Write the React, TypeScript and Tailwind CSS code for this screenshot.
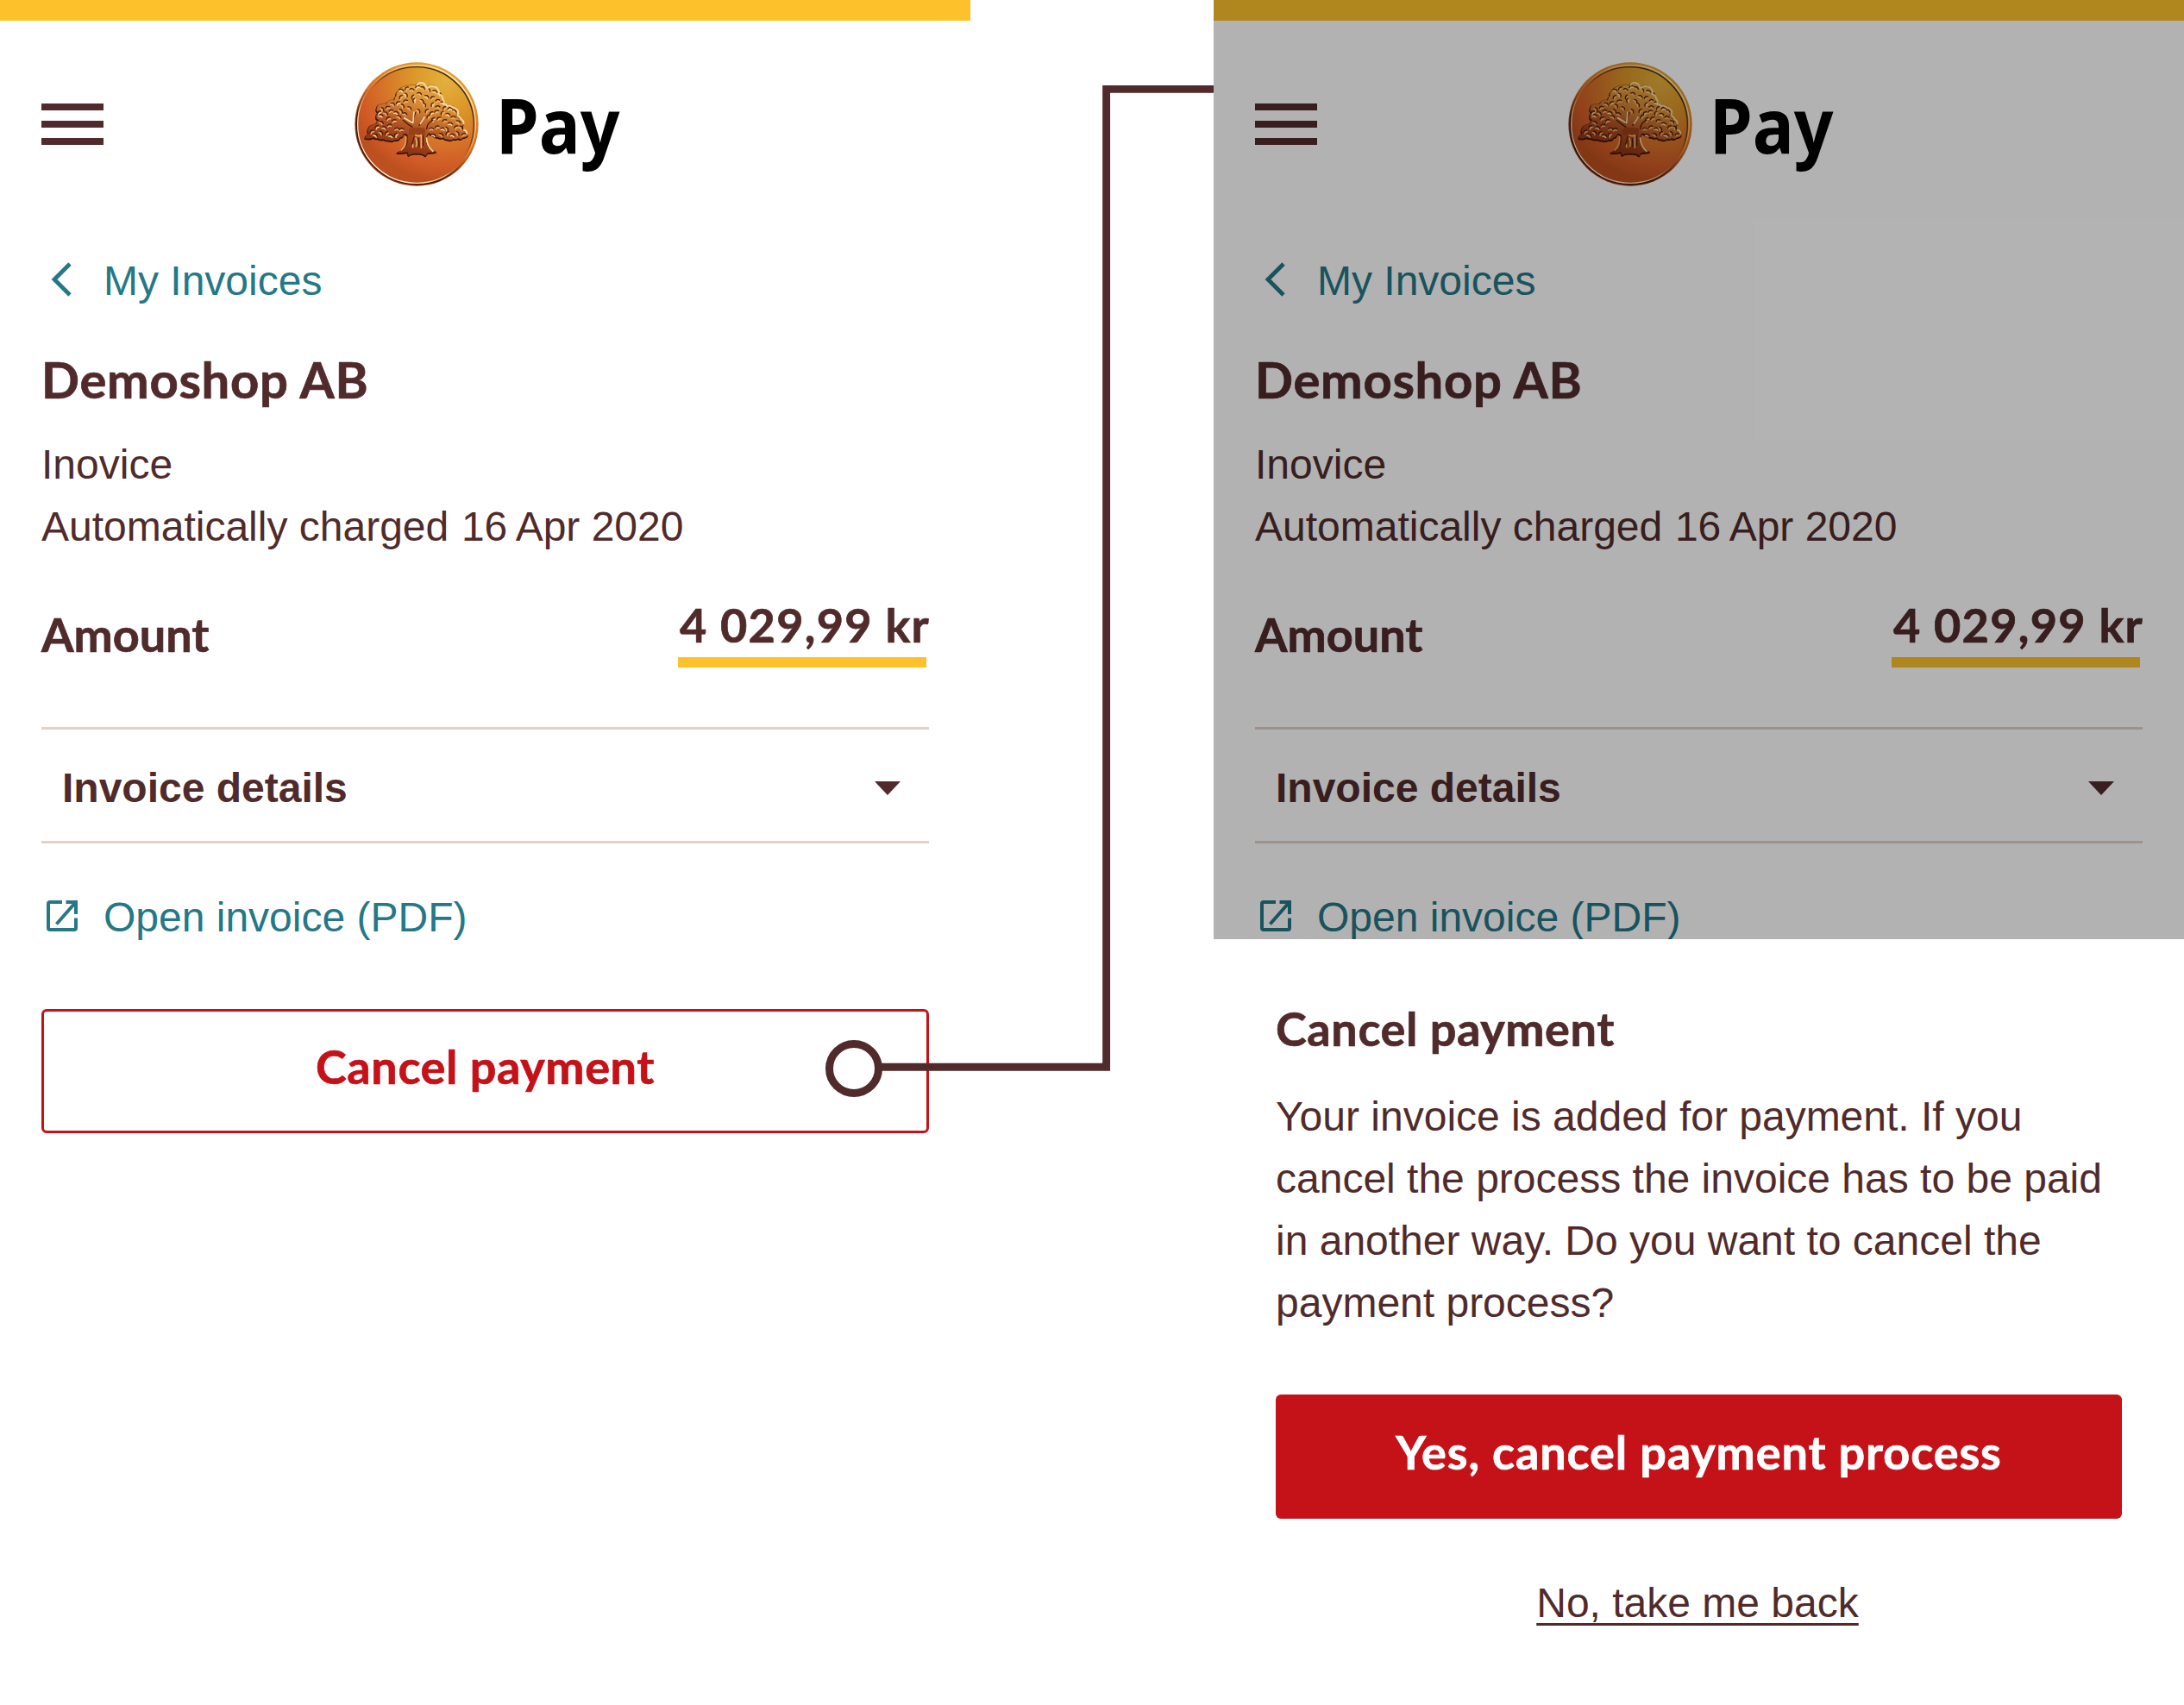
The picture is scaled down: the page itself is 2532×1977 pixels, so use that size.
import type { ReactNode } from "react";

const CANOPY =
  "M70 300 q2 -10 12 -15 q-6 -10 0 -20 q4 -12 16 -11 q4 -5 10 -3 q2 -10 10 -13 q-12 -4 -9 -13 q-2 -8 6 -13 q-10 -8 -4 -18 q2 -14 16 -11 q8 -5 16 -1 q4 -12 14 -13 q6 -4 14 0 q0 -10 7 -16 q-2 -12 8 -18 q6 -12 18 -14 q10 -6 20 -4 q8 -6 22 0 q4 -12 18 -12 q10 2 14 11 q6 8 6 10 q8 -12 20 -9 q12 0 17 10 q6 8 2 16 q14 4 14 16 q8 8 4 18 q10 0 12 10 q6 -8 16 0 q10 2 18 10 q8 8 2 18 q-4 6 -2 10 q12 4 14 16 q10 2 10 12 q-2 8 -6 14 q12 2 12 12 q12 10 9 14 q-8 6 -16 6 q-6 8 -16 2 q-8 6 -16 2 q-10 8 -20 2 q-10 2 -16 -6 q-12 4 -18 -2 q-10 2 -16 -6 q-10 0 -14 -8 q-6 2 -8 8 L281 300 q0 24 14 36 q8 8 22 12 q-14 4 -26 3 q-8 2 -10 11 q-12 -10 -30 -8 q-18 -2 -30 7 q-2 -8 -4 -12 q-18 4 -36 2 q10 -6 20 -9 q14 -8 16 -26 L218 292 q-6 -10 -14 -6 q-2 12 -12 12 q-6 12 -18 8 q-10 8 -22 2 q-10 2 -18 -4 q-12 4 -20 -3 q-10 2 -16 -3 q-12 6 -22 4 Z";

/* Light-catching edge along the upper right of the foliage */
const HIGHLIGHT =
  "M250 116 q4 -10 16 -9 q10 2 14 11 q4 8 6 10 q8 -10 20 -7 q12 0 17 10 q6 8 2 16 q14 4 14 16 q8 8 4 18 q10 0 12 10 q6 -8 16 0 q10 2 18 10 q8 8 2 18 M392 222 q10 6 12 14 q10 4 8 14 M414 272 q8 2 10 12";

/* Foliage flecks: x, y, rotation */
const FLECKS: [number, number, number][] = [
  [196, 134, 20], [214, 128, -40], [232, 132, 10], [252, 122, -20], [270, 126, 30], [290, 132, 45], [312, 138, 20], [330, 148, 60],
  [194, 158, -50], [212, 150, 60], [236, 158, -70], [258, 146, 15], [284, 156, 30], [304, 160, -30], [322, 170, -10], [340, 178, 20],
  [148, 194, -20], [166, 182, 30], [184, 178, -30], [200, 188, 50], [224, 196, 40], [240, 170, -80], [268, 172, 55], [276, 184, 60],
  [304, 184, -60], [322, 192, 0], [346, 196, -40], [364, 198, -10], [380, 206, 30], [130, 200, 60], [124, 222, 10], [142, 214, 40],
  [160, 206, -10], [178, 212, 20], [194, 206, 50], [150, 232, -30], [170, 240, -20], [188, 226, 30], [126, 246, 30], [110, 262, -40],
  [256, 206, 60], [284, 206, -50], [300, 214, -40], [318, 208, -20], [338, 214, -60], [358, 218, 20], [376, 228, 0], [394, 244, 30],
  [306, 236, -50], [326, 232, -30], [346, 240, -20], [366, 250, 10], [386, 262, -30], [404, 264, 50], [136, 264, 20], [154, 256, -10],
  [92, 278, -40], [106, 290, 30], [126, 282, 50], [144, 284, -50], [160, 292, 20], [180, 268, 0], [196, 270, -10], [176, 290, -60],
  [300, 268, 0], [320, 262, -20], [340, 268, 10], [334, 288, 30], [356, 284, -50], [374, 290, 20], [392, 284, 60], [412, 288, -20],
  [308, 290, 20], [210, 172, -20], [354, 268, 60], [118, 212, -40], [290, 226, -45], [208, 216, 20],
];

function Coin({ id }: { id: string }) {
  return (
    <svg className="size-36 shrink-0" viewBox="33 36 432 432" aria-hidden="true">
      <defs>
        <radialGradient id={`${id}-face`} gradientUnits="userSpaceOnUse" cx="350" cy="100" r="350">
          <stop offset="0" stopColor="#e3b03e" />
          <stop offset=".3" stopColor="#dc9a2b" />
          <stop offset=".62" stopColor="#d67428" />
          <stop offset=".86" stopColor="#d05a26" />
          <stop offset="1" stopColor="#bd501f" />
        </radialGradient>
        <linearGradient id={`${id}-rim`} x1=".75" y1="0" x2=".25" y2="1">
          <stop offset="0" stopColor="#e6a935" />
          <stop offset=".5" stopColor="#cf6a2a" />
          <stop offset=".8" stopColor="#7c3213" />
          <stop offset="1" stopColor="#b5491c" />
        </linearGradient>
        <linearGradient id={`${id}-light`} x1=".8" y1=".1" x2=".15" y2=".9">
          <stop offset="0" stopColor="#fff0c4" />
          <stop offset=".3" stopColor="#f0b860" />
          <stop offset=".5" stopColor="#d9803a" stopOpacity=".3" />
          <stop offset=".7" stopColor="#f6c995" />
          <stop offset="1" stopColor="#fff6e6" />
        </linearGradient>
        <linearGradient id={`${id}-dark`} x1=".75" y1=".1" x2=".25" y2=".8">
          <stop offset="0" stopColor="#3c2205" />
          <stop offset=".35" stopColor="#5a2d0a" stopOpacity=".75" />
          <stop offset=".55" stopColor="#a04a1c" stopOpacity="0" />
        </linearGradient>
        <linearGradient id={`${id}-shade`} x1=".7" y1=".2" x2=".2" y2=".85">
          <stop offset=".45" stopColor="#4a1a08" stopOpacity="0" />
          <stop offset=".75" stopColor="#3a1206" />
          <stop offset="1" stopColor="#4a1a08" />
        </linearGradient>
        <linearGradient id={`${id}-tree`} gradientUnits="userSpaceOnUse" x1="300" y1="110" x2="225" y2="350">
          <stop offset="0" stopColor="#e5ab3e" />
          <stop offset=".35" stopColor="#d48736" />
          <stop offset=".7" stopColor="#ad4f24" />
          <stop offset="1" stopColor="#8e3415" />
        </linearGradient>
        <linearGradient id={`${id}-glint`} gradientUnits="userSpaceOnUse" x1="330" y1="110" x2="170" y2="340">
          <stop offset="0" stopColor="#f9dc92" />
          <stop offset=".5" stopColor="#f5c480" />
          <stop offset="1" stopColor="#e9a160" />
        </linearGradient>
      </defs>
      <circle cx="249" cy="252" r="215" fill={`url(#${id}-rim)`} />
      <circle cx="249" cy="252" r="209" fill="none" stroke={`url(#${id}-shade)`} strokeWidth="5" />
      <circle cx="249" cy="252" r="203" fill={`url(#${id}-face)`} />
      <circle cx="249" cy="252" r="205" fill="none" stroke={`url(#${id}-light)`} strokeWidth="4" />
      <circle cx="248" cy="253" r="200" fill="none" stroke={`url(#${id}-dark)`} strokeWidth="4" />
      <g strokeLinejoin="round" strokeLinecap="round">
        <path d={CANOPY} transform="translate(-1 3)" fill="#33100a" stroke="#33100a" strokeWidth="4" />
        <path d={CANOPY} fill={`url(#${id}-tree)`} stroke="#6a2d0e" strokeOpacity=".6" strokeWidth="2" />
        {FLECKS.map(([x, y, r], i) => (
          <g key={i} transform={`translate(${x} ${y}) rotate(${r})`} fill="none">
            <path d="M-7 0 Q0 -8 8 0" stroke="#4a1c08" strokeWidth="3.6" />
            <path d="M-6 5 Q0 0 6 5" stroke={`${i % 3 === 0 ? "#fbdca0" : "#f0b76a"}`} strokeWidth="4" />
          </g>
        ))}
        <path d={HIGHLIGHT} fill="none" stroke="#f6d79a" strokeWidth="6" />
        <path d="M284 268 Q286 246 306 238 M234 262 Q214 250 202 238" fill="none" stroke="#4a1a08" strokeWidth="4" />
        <path d="M232 250 L245 212 M258 256 L272 232" fill="none" stroke="#4a1a08" strokeWidth="4" />
        <path d="M206 230 L236 248 L240 210 M262 250 L276 228" fill="none" stroke="#fad9a4" strokeWidth="5" />
        <path d="M222 268 Q250 258 280 268 L277 290 H222 Z" fill="#9a4018" />
        <path d="M246 290 Q258 296 265 290 V334 M236 322 V332 M246 300 Q252 320 247 330" fill="none" stroke="#f0b060" strokeWidth="5" />
        <path d="M283 300 Q286 330 306 346" fill="none" stroke="#f9dc9c" strokeWidth="5" />
        <path d="M212 296 Q214 324 196 342" fill="none" stroke="#eaa85e" strokeWidth="4" />
        <path d="M240 296 L233 322 M256 302 L258 330 M272 292 V326" fill="none" stroke="#4a1a08" strokeWidth="3.5" />
      </g>
    </svg>
  );
}

function Header({ id }: { id: string }) {
  return (
    <header className="relative flex h-60 items-center pl-[411px]">
      <div className="absolute left-12 flex flex-col gap-3">
        <span className="h-2 w-[72px] bg-[#512b2b]" />
        <span className="h-2 w-[72px] bg-[#512b2b]" />
        <span className="h-2 w-[72px] bg-[#512b2b]" />
      </div>
      <Coin id={id} />
      <span className="ml-[20px] origin-left scale-x-[0.91] pb-px font-['Noto_Sans',sans-serif] text-[88px] leading-[120px] font-bold text-black">
        Pay
      </span>
    </header>
  );
}

function InvoiceScreen({ id, children }: { id: string; children?: ReactNode }) {
  return (
    <section className="relative h-[1977px] w-[1125px] overflow-hidden bg-white">
      <div className="h-6 bg-[#fdc12c]" />
      <Header id={id} />
      <div className="flex flex-col px-12">
        <a className="mt-[25px] flex h-[72px] items-center text-[#257886]">
          <svg className="size-[72px]" viewBox="0 0 72 72" fill="none" aria-hidden="true">
            <path d="M33 17 L15 35 L33 53" stroke="currentColor" strokeWidth="4.8" />
          </svg>
          <span className="pt-[2px]">My Invoices</span>
        </a>
        <h1 className="mt-[43px] font-[Lato,sans-serif] text-[58px] leading-[72px] font-bold tracking-[0.7px] [-webkit-text-stroke:0.7px]">
          Demoshop AB
        </h1>
        <p className="mt-[27px]">
          Inovice
          <br />
          Automatically charged<span className="tracking-[1.3px]"> </span>16
          <span className="tracking-[-4px]"> </span>Apr 2020
        </p>
        <div className="mt-[41px] flex h-[86px] items-start justify-between font-[Lato,sans-serif] text-[54px] font-bold [-webkit-text-stroke:0.7px]">
          <span className="mt-[12px]">Amount</span>
          <div className="flex flex-col items-end">
            <span className="mt-px -mr-px h-[73px] tracking-[1.3px] whitespace-nowrap">4 029,99 kr</span>
            <span className="mr-[3px] h-3 w-72 bg-[#fdc12c]" />
          </div>
        </div>
        <div className="mt-[69px] flex h-[135px] items-center justify-between border-y-3 border-[#e2d2c6] pt-[6px] pr-[33px] pl-6">
          <span className="font-bold">Invoice details</span>
          <svg className="h-4 w-[30px]" viewBox="0 0 30 16" aria-hidden="true">
            <path d="M0 0 H30 L15 16 Z" fill="#512b2b" />
          </svg>
        </div>
        <a className="mt-[49px] flex h-[72px] items-center text-[#257886]">
          <svg className="size-[72px]" viewBox="0 0 72 72" fill="none" aria-hidden="true">
            <path
              d="M24 19 H10 Q8 19 8 21 V49 Q8 51 10 51 H38 Q40 51 40 49 V37.5 M28.5 19 H40 V33 M17.5 44.5 L39 20"
              stroke="currentColor"
              strokeWidth="4"
            />
          </svg>
          <span className="pt-[2px]">Open invoice (PDF)</span>
        </a>
        <button className="mt-[71px] flex h-36 items-center justify-center rounded-md border-3 border-[#c51118] pb-[10px] font-[Lato,sans-serif] text-[54px] leading-[72px] font-bold tracking-[0.6px] text-[#c51118] [-webkit-text-stroke:0.7px]">
          Cancel payment
        </button>
      </div>
      {children}
    </section>
  );
}

function CancelDialog() {
  return (
    <div className="absolute inset-0 flex flex-col justify-end bg-black/30">
      <div className="flex h-[888px] flex-col bg-white px-[72px] pt-[68px]">
        <h2 className="font-[Lato,sans-serif] text-[54px] leading-[72px] font-bold tracking-[0.6px] [-webkit-text-stroke:0.7px]">
          Cancel payment
        </h2>
        <p className="mt-[30px] whitespace-nowrap">
          Your invoice is added for payment. If you
          <br />
          cancel the process the invoice has to be paid
          <br />
          in another way. Do you want to cancel the
          <br />
          payment process?
        </p>
        <button className="mt-[70px] flex h-36 w-[981px] items-center justify-center rounded-md bg-[#c51118] pb-[10px] font-[Lato,sans-serif] text-[54px] leading-[72px] font-bold tracking-[0.9px] text-white [-webkit-text-stroke:0.7px]">
          Yes, cancel payment process
        </button>
        <a className="mt-[62px] self-center pr-[3px]">
          <span className="underline decoration-3 underline-offset-[7px] [text-decoration-skip-ink:none]">No, take me back</span>
        </a>
      </div>
    </div>
  );
}

export default function App() {
  return (
    <main className="relative flex h-[1977px] w-[2532px] justify-between overflow-hidden bg-white font-['Liberation_Sans',Arial,sans-serif] text-[48px] leading-[72px] text-[#512b2b]">
      <InvoiceScreen id="left" />
      <InvoiceScreen id="right">
        <CancelDialog />
      </InvoiceScreen>
      <svg className="absolute top-[90px] left-[950px] h-[1190px] w-[457px]" viewBox="950 90 457 1190" fill="none" aria-hidden="true">
        <path d="M1019 1237.3 H1282.6 V103.4 H1407" stroke="#512b2b" strokeWidth="8.9" />
        <circle cx="990" cy="1239" r="28.5" stroke="#512b2b" strokeWidth="9" />
      </svg>
    </main>
  );
}
